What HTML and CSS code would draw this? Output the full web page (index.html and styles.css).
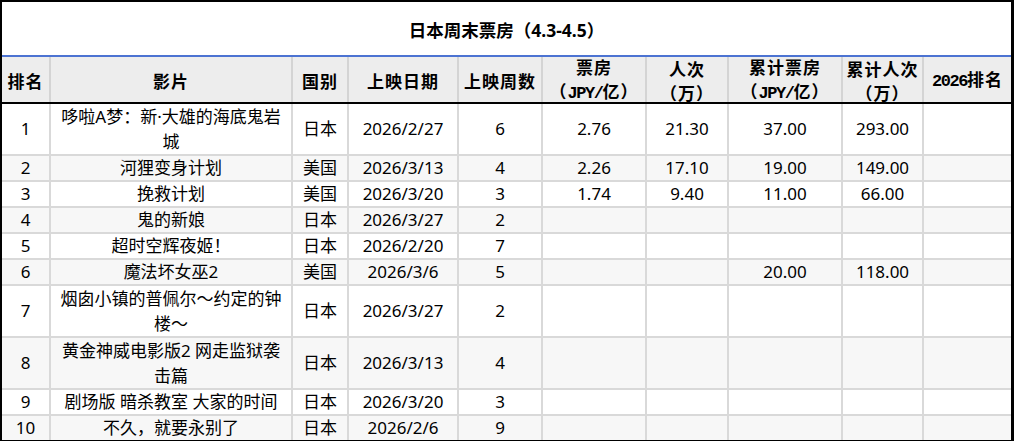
FILE: index.html
```html
<!DOCTYPE html>
<html lang="zh-CN">
<head>
<meta charset="utf-8">
<title>日本周末票房</title>
<link rel="stylesheet" href="styles.css">
</head>
<body>
<div class="sheet">
  <div class="title">日本周末票房（4.3-4.5）</div>
  <div class="row head">
    <div class="c"><span>排名</span></div>
    <div class="c"><span>影片</span></div>
    <div class="c"><span>国别</span></div>
    <div class="c"><span>上映日期</span></div>
    <div class="c"><span>上映周数</span></div>
    <div class="c"><span>票房<br>（<span class="lat">JPY/</span>亿）</span></div>
    <div class="c"><span>人次<br>（万）</span></div>
    <div class="c"><span>累计票房<br>（<span class="lat">JPY/</span>亿）</span></div>
    <div class="c"><span>累计人次<br>（万）</span></div>
    <div class="c"><span><span class="lat">2026</span>排名</span></div>
  </div>
  <div class="row">
    <div class="c">1</div><div class="c wrap">哆啦A梦：新·大雄的海底鬼岩城</div><div class="c">日本</div><div class="c">2026/2/27</div><div class="c">6</div><div class="c">2.76</div><div class="c">21.30</div><div class="c">37.00</div><div class="c">293.00</div><div class="c"></div>
  </div>
  <div class="row alt">
    <div class="c">2</div><div class="c">河狸变身计划</div><div class="c">美国</div><div class="c">2026/3/13</div><div class="c">4</div><div class="c">2.26</div><div class="c">17.10</div><div class="c">19.00</div><div class="c">149.00</div><div class="c"></div>
  </div>
  <div class="row">
    <div class="c">3</div><div class="c">挽救计划</div><div class="c">美国</div><div class="c">2026/3/20</div><div class="c">3</div><div class="c">1.74</div><div class="c">9.40</div><div class="c">11.00</div><div class="c">66.00</div><div class="c"></div>
  </div>
  <div class="row alt">
    <div class="c">4</div><div class="c">鬼的新娘</div><div class="c">日本</div><div class="c">2026/3/27</div><div class="c">2</div><div class="c"></div><div class="c"></div><div class="c"></div><div class="c"></div><div class="c"></div>
  </div>
  <div class="row">
    <div class="c">5</div><div class="c">超时空辉夜姬！</div><div class="c">日本</div><div class="c">2026/2/20</div><div class="c">7</div><div class="c"></div><div class="c"></div><div class="c"></div><div class="c"></div><div class="c"></div>
  </div>
  <div class="row alt">
    <div class="c">6</div><div class="c">魔法坏女巫2</div><div class="c">美国</div><div class="c">2026/3/6</div><div class="c">5</div><div class="c"></div><div class="c"></div><div class="c">20.00</div><div class="c">118.00</div><div class="c"></div>
  </div>
  <div class="row">
    <div class="c">7</div><div class="c wrap">烟囱小镇的普佩尔～约定的钟楼～</div><div class="c">日本</div><div class="c">2026/3/27</div><div class="c">2</div><div class="c"></div><div class="c"></div><div class="c"></div><div class="c"></div><div class="c"></div>
  </div>
  <div class="row alt">
    <div class="c">8</div><div class="c wrap">黄金神威电影版2 网走监狱袭击篇</div><div class="c">日本</div><div class="c">2026/3/13</div><div class="c">4</div><div class="c"></div><div class="c"></div><div class="c"></div><div class="c"></div><div class="c"></div>
  </div>
  <div class="row">
    <div class="c">9</div><div class="c">剧场版 暗杀教室 大家的时间</div><div class="c">日本</div><div class="c">2026/3/20</div><div class="c">3</div><div class="c"></div><div class="c"></div><div class="c"></div><div class="c"></div><div class="c"></div>
  </div>
  <div class="row alt last">
    <div class="c">10</div><div class="c">不久，就要永别了</div><div class="c">日本</div><div class="c">2026/2/6</div><div class="c">9</div><div class="c"></div><div class="c"></div><div class="c"></div><div class="c"></div><div class="c"></div>
  </div>
</div>
</body>
</html>
```

FILE: styles.css
```css
html, body {
  margin: 0;
  padding: 0;
  background: #ffffff;
  overflow: hidden;
}

.sheet {
  width: 1014px;
  box-sizing: border-box;
  border-top: 2px solid #000;
  border-left: 2px solid #000;
  border-right: 3px solid #000;
  border-bottom: 3px solid #000;
  font-family: "Noto Sans", "Noto Sans CJK SC", sans-serif;
  font-size: 17px;
  color: #000;
  background: #fff;
}

.title {
  box-sizing: border-box;
  height: 55px;
  padding-top: 1px;
  border-bottom: 2px solid #4c73d2;
  display: flex;
  align-items: center;
  justify-content: center;
  font-weight: 700;
  font-size: 17.5px;
}

.row {
  display: grid;
  grid-template-columns: 49px 242px 56px 110px 84px 104px 82px 114px 81px 87px;
  border-bottom: 2px solid #d9d9d9;
  background: #fff;
}

.row.alt {
  background: #f7f7f7;
}

.row.last {
  border-bottom: 0;
}

.row.head {
  height: 45px;
  background: #ededed;
  border-bottom: 2px solid #000;
  font-family: "Noto Sans CJK SC", sans-serif;
  font-weight: 700;
  letter-spacing: 1px;
  line-height: 18px;
}

.row.head .c {
  border-right-color: #d4d4d4;
  padding: 2px 1px 0;
}

.lat {
  font-family: "Liberation Mono", monospace;
  font-size: 17px;
  letter-spacing: -1.5px;
}

.c {
  box-sizing: border-box;
  border-right: 2px solid #d9d9d9;
  display: flex;
  align-items: center;
  justify-content: center;
  text-align: center;
  padding: 0 5px;
  line-height: 24px;
  min-height: 24px;
}

.c.wrap {
  line-height: 24.5px;
  padding-top: 1px;
}

.c:last-child {
  border-right: 0;
}
```
